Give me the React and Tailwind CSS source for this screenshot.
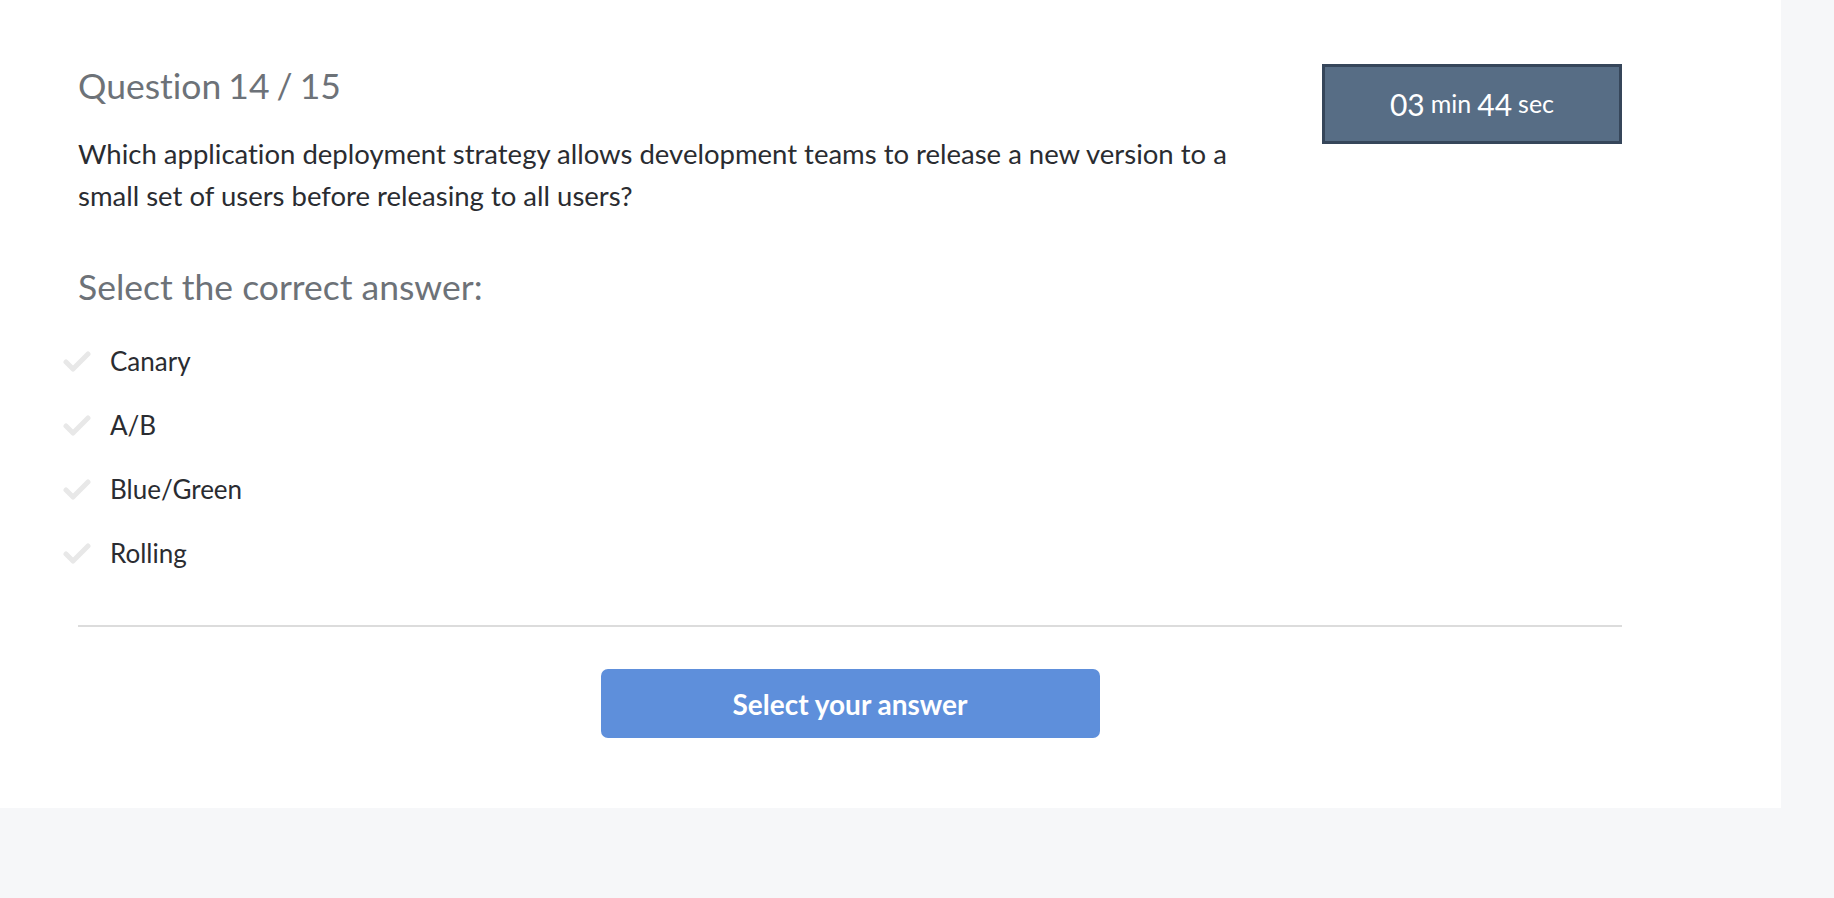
import React from "react";

const options = ["Canary", "A/B", "Blue/Green", "Rolling"];

const Check = () => (
  <svg width="28" height="22" viewBox="0 0 28 22" fill="none">
    <path
      d="M3 12 L10 19 L25 4"
      stroke="#e8e8e8"
      strokeWidth="5"
      strokeLinecap="round"
      strokeLinejoin="round"
    />
  </svg>
);

export default function App() {
  return (
    <div
      className="min-h-[898px] w-full bg-[#f6f7f9] [font-variant-ligatures:none]"
      style={{ fontFamily: "Lato, 'Noto Sans', sans-serif" }}
    >
      <div className="w-[1781px] bg-white pt-[64px] pb-[70px]">
        <div className="mx-[78px] w-[1544px]">
          {/* header row */}
          <div className="flex justify-between items-start">
            <div className="w-[1180px]">
              <h1 className="text-[35.5px] leading-[43px] text-[#6d7278] [word-spacing:-2px]">
                Question 14 / 15
              </h1>
              <p className="mt-[26px] text-[27.5px] leading-[42px] text-[#2a2c31]">
                Which application deployment strategy allows development teams to release a new version to a small set of users before releasing to all users?
              </p>
            </div>
            <div className="w-[300px] h-[80px] flex items-center justify-center bg-[#576d85] border-[3px] border-[#36465a] text-white">
              <span className="text-[30px]">03</span>
              <span className="text-[25px] ml-[6px]">min</span>
              <span className="text-[30px] ml-[6px]">44</span>
              <span className="text-[25px] ml-[6px]">sec</span>
            </div>
          </div>

          <h2 className="mt-[49px] text-[35.5px] leading-[41px] text-[#6d7278]">
            Select the correct answer:
          </h2>

          <ul className="mt-[22px]">
            {options.map((opt) => (
              <li key={opt} className="h-[64px] flex items-center -ml-[15px]">
                <Check />
                <span className="ml-[19px] text-[26px] text-[#2a2c31]">{opt}</span>
              </li>
            ))}
          </ul>

          <div className="mt-[40px] border-t-[2px] border-[#dcdcdc]" />

          <div className="mt-[42px] flex justify-center">
            <button className="w-[499px] h-[69px] rounded-[7px] bg-[#5e8fdb] text-white text-[28px] font-bold">
              Select your answer
            </button>
          </div>
        </div>
      </div>
    </div>
  );
}
